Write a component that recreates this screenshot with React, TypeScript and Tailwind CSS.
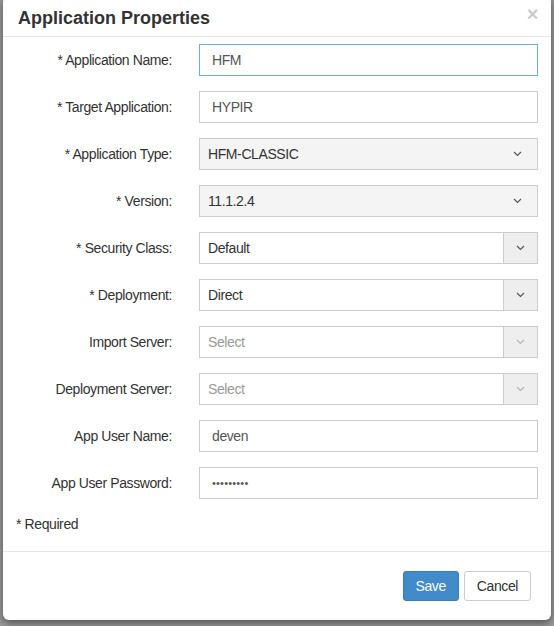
import React from 'react';

type Field =
    | { label: string; kind: 'input'; value: string; focused?: boolean }
    | { label: string; kind: 'password'; value: string }
    | { label: string; kind: 'select'; value: string }
    | { label: string; kind: 'group'; value: string; disabled?: boolean };

const fields: Field[] = [
    { label: '* Application Name:', kind: 'input', value: 'HFM', focused: true },
    { label: '* Target Application:', kind: 'input', value: 'HYPIR' },
    { label: '* Application Type:', kind: 'select', value: 'HFM-CLASSIC' },
    { label: '* Version:', kind: 'select', value: '11.1.2.4' },
    { label: '* Security Class:', kind: 'group', value: 'Default' },
    { label: '* Deployment:', kind: 'group', value: 'Direct' },
    { label: 'Import Server:', kind: 'group', value: 'Select', disabled: true },
    { label: 'Deployment Server:', kind: 'group', value: 'Select', disabled: true },
    { label: 'App User Name:', kind: 'input', value: 'deven' },
    { label: 'App User Password:', kind: 'password', value: '•••••••••' },
];

const Chevron = ({ light }: { light?: boolean }) => (
    <svg width="9" height="6" viewBox="0 0 9 6" fill="none">
        <path d="M1 1l3.5 3.5L8 1" stroke={light ? '#b5b5b5' : '#555'} strokeWidth="1.2" />
    </svg>
);

const Control = ({ field }: { field: Field }) => {
    if (field.kind === 'input' || field.kind === 'password') {
        const focused = field.kind === 'input' && field.focused;
        return (
            <div
                className={`h-[32px] w-[339px] bg-white border flex items-center px-[12px] ${
                    focused ? 'border-[#66afe9]' : 'border-[#ccc]'
                }`}
            >
                <span className={field.kind === 'password' ? 'text-[11px] text-[#555] tracking-[0.2px]' : 'text-[14px] text-[#555]'}>
                    {field.value}
                </span>
            </div>
        );
    }
    if (field.kind === 'select') {
        return (
            <div className="h-[32px] w-[339px] bg-[#f4f4f4] border border-[#ccc] flex items-center justify-between pl-[8px] pr-[15px]">
                <span className="text-[14px] text-[#333]">{field.value}</span>
                <Chevron />
            </div>
        );
    }
    return (
        <div className="h-[32px] w-[339px] bg-white border border-[#ccc] flex">
            <div className="flex-1 flex items-center pl-[8px]">
                <span className={`text-[14px] ${field.disabled ? 'text-[#999]' : 'text-[#333]'}`}>{field.value}</span>
            </div>
            <div className="w-[34px] bg-[#eee] border-l border-[#ccc] flex items-center justify-center">
                <Chevron light={field.disabled} />
            </div>
        </div>
    );
};

export default function App() {
    return (
        <div className="w-[554px] h-[626px] bg-[#9b9b9b] overflow-hidden font-['Liberation_Sans',Arial,sans-serif] tracking-[-0.4px]">
            <div className="ml-[3px] -mt-[4px] w-[548px] h-[624px] bg-white rounded-md shadow-[0_3px_9px_rgba(0,0,0,0.5)] flex flex-col">
                {/* Header */}
                <div className="h-[41px] pt-[4px] border-b border-[#e5e5e5] px-[15px] flex items-center justify-between">
                    <h4 className="text-[18px] font-bold text-[#333] tracking-normal">Application Properties</h4>
                    <span className="text-[20px] font-bold leading-none text-black opacity-20 -mt-[8px] mr-[-2px]">×</span>
                </div>

                {/* Body */}
                <div className="pt-[7px] pl-[15px] pr-[10px] pb-[17px]">
                    {fields.map((f) => (
                        <div key={f.label} className="flex items-center mb-[15px]">
                            <label className="w-[154px] text-right text-[14px] text-[#333]">{f.label}</label>
                            <div className="ml-[27px]">
                                <Control field={f} />
                            </div>
                        </div>
                    ))}
                    <p className="-ml-[2px] text-[14px] leading-[20px] text-[#333]">* Required</p>
                </div>

                {/* Footer */}
                <div className="border-t border-[#e5e5e5] pt-[19px] pr-[20px] flex justify-end gap-[5px]">
                    <button className="h-[30px] px-[12px] bg-[#428bca] border border-[#357ebd] rounded-[3px] text-[14px] text-white">
                        Save
                    </button>
                    <button className="h-[30px] px-[12px] bg-white border border-[#ccc] rounded-[3px] text-[14px] text-[#333]">
                        Cancel
                    </button>
                </div>
            </div>
        </div>
    );
}
